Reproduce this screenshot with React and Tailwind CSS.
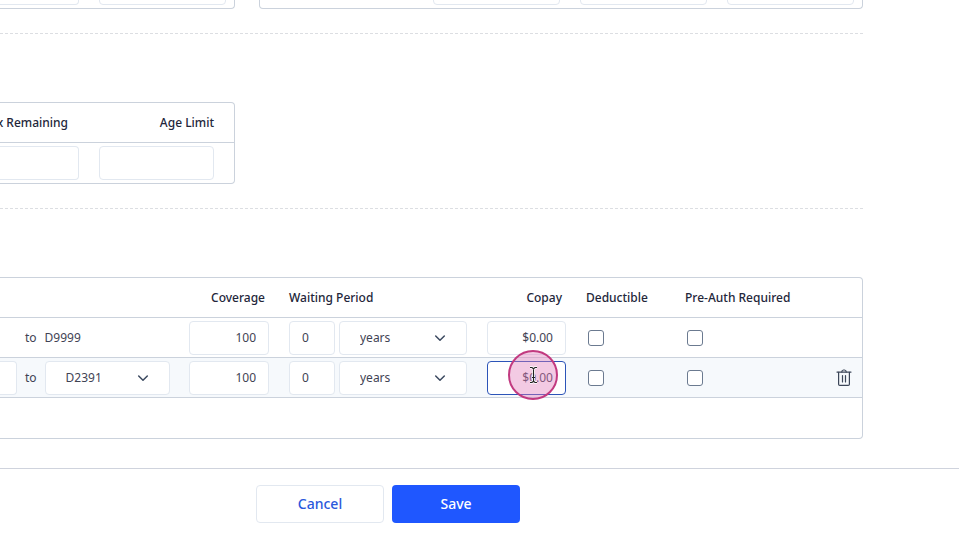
import React from "react";

const field =
  "block h-[34px] rounded border border-[#e2e8f0] bg-white text-xs text-[#3f4354] outline-none";

const headCell = "border-b border-[#cbd2dc] py-0 font-medium";
const bodyCell = "border-b border-[#cbd2dc] px-2.5 py-0";

function Chevron() {
  return (
    <svg
      className="pointer-events-none absolute right-[21px] top-[11px]"
      width="12"
      height="12"
      viewBox="0 0 12 12"
      fill="none"
      stroke="#3c4a60"
      strokeWidth="1.5"
      strokeLinecap="round"
      strokeLinejoin="round"
    >
      <path d="M1.7 4 6 8.3 10.3 4" />
    </svg>
  );
}

function Select({ label, options, className }) {
  return (
    <div className={`relative ${className}`}>
      <select
        aria-label={label}
        className={`${field} w-full appearance-none pl-5 pr-10`}
      >
        {options.map((option) => (
          <option key={option}>{option}</option>
        ))}
      </select>
      <Chevron />
    </div>
  );
}

function Trash() {
  return (
    <svg width="16" height="18" viewBox="0 0 16 18" fill="none" stroke="#3c4658" strokeWidth="1.2" strokeLinecap="round" strokeLinejoin="round">
      <path d="M1 3.1h14" />
      <path d="M5.8 2.9C5.8 1.8 6.6 1 7.5 1h1c.9 0 1.7.8 1.7 1.9" />
      <path d="M2.6 3.3v11.9c0 .8.4 1.2 1.2 1.2h8.4c.8 0 1.2-.4 1.2-1.2V3.3" />
      <path d="M6.5 6.5v6.5M9.5 6.5v6.5" />
    </svg>
  );
}

function ClickMarker() {
  return (
    <div className="pointer-events-none absolute left-[21px] top-[-11px] flex size-[50px] items-center justify-center rounded-full border-2 border-[#c23a80] bg-[#e07ab8]/40">
      <svg width="9" height="18" viewBox="0 0 9 18" fill="none">
        <path d="M1 1.5h2l1.5 1.2L6 1.5h2M4.5 2.7v12.6M1 16.5h2l1.5-1.2L6 16.5h2M3 11.5h3" stroke="#fff" strokeWidth="2.6" />
        <path d="M1 1.5h2l1.5 1.2L6 1.5h2M4.5 2.7v12.6M1 16.5h2l1.5-1.2L6 16.5h2M3 11.5h3" stroke="#222" strokeWidth="1.1" />
      </svg>
    </div>
  );
}

function Checkbox({ label }) {
  return (
    <input
      type="checkbox"
      aria-label={label}
      className="ml-0.5 block size-4 appearance-none rounded-[3px] border border-[#6b7a90] bg-white"
    />
  );
}

function CoverageRow({ children, active }) {
  return (
    <tr className={active ? "h-10 bg-[#f6f9fc]" : "h-10"}>
      <td className="border-b border-[#cbd2dc] p-0">{children}</td>
      <td className={bodyCell}>
        <input aria-label="Coverage" defaultValue="100" className={`${field} w-full px-3 text-right`} />
      </td>
      <td className={bodyCell}>
        <div className="flex gap-1">
          <input aria-label="Waiting period" defaultValue="0" className={`${field} w-[46px] pl-3`} />
          <Select label="Waiting period unit" options={["years", "months"]} className="flex-1" />
        </div>
      </td>
      <td className={bodyCell}>
        <div className="relative">
          <input
            aria-label="Copay"
            defaultValue="$0.00"
            className={
              active
                ? "block h-[34px] w-full rounded border border-[#2c54b8] bg-white px-3 text-right text-xs text-[#3f4354] outline-none"
                : `${field} w-full px-3 text-right`
            }
          />
          {active && <ClickMarker />}
        </div>
      </td>
      <td className={bodyCell}>
        <Checkbox label="Deductible" />
      </td>
      <td className={bodyCell}>
        <Checkbox label="Pre-auth required" />
      </td>
      <td className={bodyCell}>
        {active && (
          <button aria-label="Delete row" className="ml-auto block">
            <Trash />
          </button>
        )}
      </td>
    </tr>
  );
}

export default function App() {
  return (
    <div className="overflow-hidden bg-white text-xs text-[#3f4354] [font-family:'Noto_Sans',sans-serif]">
      <main className="pr-24">
        <section className="flex h-[9px] items-end gap-6 overflow-hidden">
          <div className="flex w-[235px] gap-5 rounded-br border-b border-r border-[#cbd2dc] py-[3px] pr-2">
            <input aria-label="Used" className={`${field} w-[79px] rounded-l-none border-l-0`} />
            <input aria-label="Remaining" className={`${field} min-w-0 flex-1`} />
          </div>
          <div className="flex flex-1 justify-end gap-5 rounded-b border border-t-0 border-[#cbd2dc] py-[3px] pr-2">
            <input aria-label="Family maximum" className={`${field} w-[127px]`} />
            <input aria-label="Family used" className={`${field} w-[127px]`} />
            <input aria-label="Family remaining" className={`${field} w-[127px]`} />
          </div>
        </section>

        <hr className="mt-6 border-dashed border-[#dcdee2]" />

        <section className="mt-17 w-[235px] rounded-r border border-l-0 border-[#cbd2dc]">
          <table className="w-full table-fixed border-separate border-spacing-0">
            <thead>
              <tr className="h-10 text-[#23263a]">
                <th className={`${headCell} w-[89px] whitespace-nowrap pr-[21px]`}>
                  <div className="flex justify-end">Max Remaining</div>
                </th>
                <th className={`${headCell} pl-2.5 pr-5 text-right`}>Age Limit</th>
              </tr>
            </thead>
            <tbody>
              <tr className="h-10">
                <td className="py-0 pl-0 pr-2.5">
                  <input aria-label="Max remaining" className={`${field} w-full rounded-l-none border-l-0`} />
                </td>
                <td className="py-0 pl-2.5 pr-5">
                  <input aria-label="Age limit" className={`${field} w-full`} />
                </td>
              </tr>
            </tbody>
          </table>
        </section>

        <hr className="mt-6 border-dashed border-[#dcdee2]" />

        <section className="mt-17 rounded-r border border-l-0 border-[#cbd2dc] pb-10">
          <table className="w-full table-fixed border-separate border-spacing-0">
            <thead>
              <tr className="h-10 text-left text-[#23263a]">
                <th className={`${headCell} w-[179px]`} />
                <th className={`${headCell} w-[100px] pr-3.5 text-right`}>Coverage</th>
                <th className={`${headCell} w-[198px] px-2.5`}>Waiting Period</th>
                <th className={`${headCell} w-[99px] pr-3.5 text-right`}>Copay</th>
                <th className={`${headCell} w-[99px] px-2.5`}>Deductible</th>
                <th className={`${headCell} w-[130px] px-2.5`}>Pre-Auth Required</th>
                <th className={headCell} />
              </tr>
            </thead>
            <tbody>
              <CoverageRow>
                <div className="flex gap-2 pl-[25px]">
                  <span>to</span>
                  <span>D9999</span>
                </div>
              </CoverageRow>
              <CoverageRow active>
                <div className="flex items-center gap-2">
                  <input aria-label="From code" className={`${field} w-[17px] rounded-l-none border-l-0`} />
                  <span>to</span>
                  <Select label="To code" options={["D2391", "D9999"]} className="w-[125px]" />
                </div>
              </CoverageRow>
            </tbody>
          </table>
        </section>
      </main>

      <footer className="mt-[29px] flex gap-2 border-t border-[#cfd3dd] pb-4 pl-64 pt-4 text-sm font-medium">
        <button className="h-[38px] w-32 rounded border border-[#e2e8f0] bg-white text-[#2a58dc]">Cancel</button>
        <button className="h-[38px] w-32 rounded bg-[#1f57ff] text-white">Save</button>
      </footer>
    </div>
  );
}
